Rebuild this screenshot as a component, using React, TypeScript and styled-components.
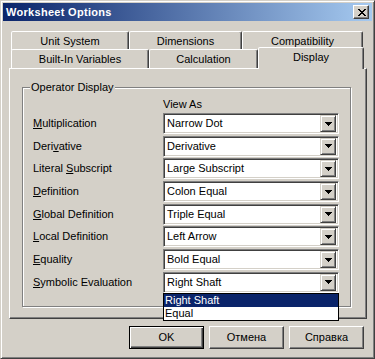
import React from 'react';
import styled, { createGlobalStyle, css } from 'styled-components';

const face = '#d4d0c8';
const hilite = '#ffffff';
const shadow = '#808080';
const dark = '#404040';

type Operator = {
  label: string;
  key: number; // index of the underlined letter
  value: string;
};

const operators: Operator[] = [
  { label: 'Multiplication', key: 0, value: 'Narrow Dot' },
  { label: 'Derivative', key: 4, value: 'Derivative' },
  { label: 'Literal Subscript', key: 8, value: 'Large Subscript' },
  { label: 'Definition', key: 0, value: 'Colon Equal' },
  { label: 'Global Definition', key: 0, value: 'Triple Equal' },
  { label: 'Local Definition', key: 0, value: 'Left Arrow' },
  { label: 'Equality', key: 0, value: 'Bold Equal' },
  { label: 'Symbolic Evaluation', key: 0, value: 'Right Shaft' },
];

const backTabs = [
  { name: 'Unit System', width: 118 },
  { name: 'Dimensions', width: 113 },
  { name: 'Compatibility', width: 121 },
];

const frontTabs = [
  { name: 'Built-In Variables', width: 138 },
  { name: 'Calculation', width: 109 },
  { name: 'Display', width: 106, active: true },
];

const GlobalStyle = createGlobalStyle`
  html, body {
    margin: 0;
    padding: 0;
    background: ${face};
  }
  body {
    font-family: "Liberation Sans", Arial, sans-serif;
    font-size: 11px;
    color: #000;
  }
  * { box-sizing: border-box; }
`;

const Window = styled.div`
  width: 375px;
  height: 359px;
  display: flex;
  flex-direction: column;
  background: ${face};
  border: 1px solid;
  border-color: ${face} ${dark} ${dark} ${face};
  box-shadow: inset 1px 1px 0 ${hilite}, inset -1px -1px 0 ${shadow};
  padding: 2px;
`;

const TitleBar = styled.div`
  flex: none;
  height: 18px;
  display: flex;
  align-items: center;
  justify-content: space-between;
  padding: 0 3px 0 3px;
  background: linear-gradient(to right, #0a246a, #a6caf0);
`;

const Title = styled.span`
  color: #fff;
  font-weight: bold;
  font-size: 11px;
  line-height: 13px;
  letter-spacing: 0.3px;
`;

const CloseButton = styled.div`
  width: 16px;
  height: 14px;
  display: flex;
  align-items: center;
  justify-content: center;
  background: ${face};
  border: 1px solid;
  border-color: ${hilite} ${dark} ${dark} ${hilite};
  box-shadow: inset -1px -1px 0 ${shadow};
  padding-left: 1px;
`;

const Body = styled.div`
  flex: 1;
  display: flex;
  flex-direction: column;
  padding: 10px 5px 7px 6px;
`;

const TabRow = styled.div<{ $back?: boolean }>`
  display: flex;
  align-items: flex-start;
  height: ${(p) => (p.$back ? 18 : 19)}px;
  padding-left: 2px;
`;

const Tab = styled.div<{ $active?: boolean }>`
  position: relative;
  height: ${(p) => (p.$active ? 22 : 19)}px;
  margin-top: ${(p) => (p.$active ? -2 : 0)}px;
  z-index: ${(p) => (p.$active ? 2 : 1)};
  display: flex;
  align-items: flex-start;
  justify-content: center;
  padding-top: 3px;
  line-height: 13px;
  background: ${face};
  border: 1px solid;
  border-bottom: none;
  border-color: ${hilite} ${dark} transparent ${hilite};
  border-radius: 2px 2px 0 0;
  box-shadow: inset -1px 0 0 ${shadow};
`;

const Panel = styled.div`
  flex: none;
  height: 251px;
  border: 1px solid;
  border-color: ${hilite} ${dark} ${dark} ${hilite};
  box-shadow: inset -1px -1px 0 ${shadow};
  padding: 18px 15px 11px 12px;
`;

const GroupBox = styled.div`
  position: relative;
  width: 329px;
  height: 220px;
  border: 1px solid ${shadow};
  box-shadow: 1px 1px 0 ${hilite}, inset 1px 1px 0 ${hilite};
  padding: 10px 0 0 10px;
`;

const GroupLabel = styled.span`
  position: absolute;
  top: -7px;
  left: 7px;
  padding: 0 1px;
  line-height: 13px;
  background: ${face};
`;

const ViewAs = styled.div`
  margin-left: 130px;
  height: 13px;
  line-height: 13px;
  margin-bottom: 2px;
`;

const Grid = styled.div`
  display: grid;
  grid-template-columns: 130px 176px;
  grid-auto-rows: 21px;
  row-gap: 1.7px;
  align-items: center;
`;

const Label = styled.span`
  line-height: 13px;
  white-space: nowrap;
`;

const Mnemonic = styled.span`
  text-decoration: underline;
  text-underline-offset: 1px;
`;

const Combo = styled.div`
  position: relative;
  height: 21px;
  width: 176px;
  display: flex;
  align-items: center;
  padding: 2px;
  background: #fff;
  border: 1px solid;
  border-color: ${shadow} ${hilite} ${hilite} ${shadow};
  box-shadow: inset 1px 1px 0 ${dark}, inset -1px -1px 0 ${face};
`;

const ComboText = styled.span`
  flex: 1;
  padding-left: 1px;
  line-height: 17px;
  white-space: nowrap;
`;

const DropButton = styled.span`
  flex: none;
  width: 16px;
  height: 17px;
  display: flex;
  align-items: center;
  justify-content: center;
  background: ${face};
  border: 1px solid;
  border-color: ${face} ${dark} ${dark} ${face};
  box-shadow: inset 1px 1px 0 ${hilite}, inset -1px -1px 0 ${shadow};
`;

const DropList = styled.div`
  position: absolute;
  top: calc(100% + 1px);
  left: -1px;
  right: -1px;
  z-index: 3;
  background: #fff;
  border: 1px solid #000;
`;

const ListItem = styled.div<{ $selected?: boolean }>`
  height: 13px;
  line-height: 13px;
  padding-left: 1px;
  ${(p) =>
    p.$selected &&
    css`
      background: #0a246a;
      color: #fff;
    `}
`;

const ButtonRow = styled.div`
  display: flex;
  justify-content: flex-end;
  gap: 5px;
  margin-top: 7px;
  padding-right: 3px;
`;

const Button = styled.div<{ $default?: boolean }>`
  width: 75px;
  height: 23px;
  display: flex;
  align-items: center;
  justify-content: center;
  background: ${face};
  line-height: 13px;
  ${(p) =>
    p.$default
      ? css`
          border: 1px solid #000;
          box-shadow: inset 1px 1px 0 ${hilite}, inset -1px -1px 0 ${dark},
            inset -2px -2px 0 ${shadow};
        `
      : css`
          border: 1px solid;
          border-color: ${hilite} ${dark} ${dark} ${hilite};
          box-shadow: inset -1px -1px 0 ${shadow};
        `}
`;

const CloseGlyph = () => (
  <svg width="8" height="7" viewBox="0 0 8 7" shapeRendering="crispEdges">
    <path
      d="M0 0h2v1h-2zM6 0h2v1h-2zM1 1h2v1h-2zM5 1h2v1h-2zM2 2h4v1h-4zM3 3h2v1h-2zM2 4h4v1h-4zM1 5h2v1h-2zM5 5h2v1h-2zM0 6h2v1h-2zM6 6h2v1h-2z"
      fill="#000"
    />
  </svg>
);

const ArrowGlyph = () => (
  <svg width="7" height="4" viewBox="0 0 7 4" shapeRendering="crispEdges">
    <path d="M0 0h7v1h-7zM1 1h5v1h-5zM2 2h3v1h-3zM3 3h1v1h-1z" fill="#000" />
  </svg>
);

const withMnemonic = (text: string, i: number) => (
  <>
    {text.slice(0, i)}
    <Mnemonic>{text[i]}</Mnemonic>
    {text.slice(i + 1)}
  </>
);

export default function App() {
  return (
    <>
      <GlobalStyle />
      <Window>
        <TitleBar>
          <Title>Worksheet Options</Title>
          <CloseButton>
            <CloseGlyph />
          </CloseButton>
        </TitleBar>
        <Body>
          <TabRow $back>
            {backTabs.map((t) => (
              <Tab key={t.name} style={{ width: t.width }}>
                {t.name}
              </Tab>
            ))}
          </TabRow>
          <TabRow>
            {frontTabs.map((t) => (
              <Tab key={t.name} $active={t.active} style={{ width: t.width }}>
                {t.name}
              </Tab>
            ))}
          </TabRow>
          <Panel>
            <GroupBox>
              <GroupLabel>Operator Display</GroupLabel>
              <ViewAs>View As</ViewAs>
              <Grid>
                {operators.map((op, i) => (
                  <React.Fragment key={op.label}>
                    <Label>{withMnemonic(op.label, op.key)}</Label>
                    <Combo>
                      <ComboText>{op.value}</ComboText>
                      <DropButton>
                        <ArrowGlyph />
                      </DropButton>
                      {i === operators.length - 1 && (
                        <DropList>
                          <ListItem $selected>Right Shaft</ListItem>
                          <ListItem>Equal</ListItem>
                        </DropList>
                      )}
                    </Combo>
                  </React.Fragment>
                ))}
              </Grid>
            </GroupBox>
          </Panel>
          <ButtonRow>
            <Button $default>OK</Button>
            <Button>Отмена</Button>
            <Button>Справка</Button>
          </ButtonRow>
        </Body>
      </Window>
    </>
  );
}
